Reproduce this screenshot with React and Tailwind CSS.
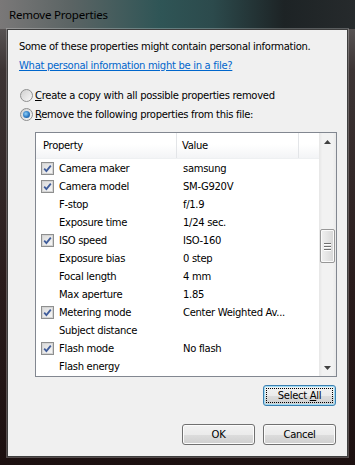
import React from "react";

const rows = [
  [true, "Camera maker", "samsung"],
  [true, "Camera model", "SM-G920V"],
  [false, "F-stop", "f/1.9"],
  [false, "Exposure time", "1/24 sec."],
  [true, "ISO speed", "ISO-160"],
  [false, "Exposure bias", "0 step"],
  [false, "Focal length", "4 mm"],
  [false, "Max aperture", "1.85"],
  [true, "Metering mode", "Center Weighted Av..."],
  [false, "Subject distance", ""],
  [true, "Flash mode", "No flash"],
  [false, "Flash energy", ""],
];

function Check() {
  return (
    <div className="w-[13px] h-[13px] border border-[#8e8f8f] bg-[#f4f4f4] flex items-center justify-center">
      <div className="w-[11px] h-[11px] border border-[#d4d4d4] bg-[linear-gradient(135deg,#dcdcdc_0%,#f6f6f6_100%)] flex items-center justify-center">
        <svg width="9" height="9" viewBox="0 0 9 9">
          <path d="M1.2 4.6 L3.4 7 L7.8 1.6" fill="none" stroke="#3f5c9a" strokeWidth="1.8" />
        </svg>
      </div>
    </div>
  );
}

function Radio({ checked }) {
  return (
    <div className="w-[13px] h-[13px] rounded-full border border-[#8e8f8f] bg-[linear-gradient(135deg,#d0d0d0_0%,#f8f8f8_100%)] flex items-center justify-center">
      {checked && (
        <div className="w-[7px] h-[7px] rounded-full bg-[radial-gradient(circle_at_40%_40%,#8ed0f8_0%,#2b78c2_55%,#1b4f8a_100%)]" />
      )}
    </div>
  );
}

function Button({ children, focused }) {
  return (
    <div
      className={
        "w-[73px] h-[21px] rounded-[3px] border flex items-center justify-center " +
        (focused
          ? "border-[#3c7fb1] shadow-[inset_0_0_0_1px_#9fdcf5] bg-[linear-gradient(180deg,#f2f2f2_0%,#ebebeb_50%,#dddddd_50%,#cfcfcf_100%)] p-[2px]"
          : "border-[#707070] shadow-[inset_0_0_0_1px_#fcfcfc] bg-[linear-gradient(180deg,#f2f2f2_0%,#ebebeb_50%,#dddddd_50%,#cfcfcf_100%)]")
      }
    >
      {focused ? (
        <div className="w-full h-full border border-dotted border-black flex items-center justify-center">
          {children}
        </div>
      ) : (
        children
      )}
    </div>
  );
}

export default function App() {
  const font = "font-['Tahoma','DejaVu_Sans',sans-serif]";
  return (
    <div className="w-[355px] h-[465px] overflow-hidden flex flex-col bg-[linear-gradient(180deg,#6a6868_0%,#3c3434_15%,#2a1c1c_60%,#1c1010_100%)]">
      <div className="h-[29px] shrink-0 flex items-center pl-[9px] bg-[linear-gradient(90deg,#7a7878_0%,#5b6464_20%,#2f5556_45%,#2c4a4c_60%,#1d2325_80%,#262a2c_100%)]">
        <span className="text-[11.5px] text-black font-['Noto_Sans','Open_Sans',sans-serif] leading-none tracking-[-0.2px]">
          Remove Properties
        </span>
      </div>
      <div className="flex px-[7px]">
        <div
          className={
            "w-[341px] h-[428px] border border-[#3e3e3e] shadow-[0_0_0_1px_rgba(255,255,255,0.25)] bg-[#f0f0f0] flex flex-col pt-[10px] pl-[11px] pr-[10px] text-[10px] tracking-[-0.3px] text-black " +
            font
          }
        >
          <div className="h-[14px] leading-[14px]">
            Some of these properties might contain personal information.
          </div>
          <div className="h-[14px] leading-[14px] mt-[5px] text-[#0066cc] underline">
            What personal information might be in a file?
          </div>
          <div className="flex items-center h-[16px] mt-[14px] pl-[1px] gap-[2px]">
            <Radio />
            <span>
              <u>C</u>reate a copy with all possible properties removed
            </span>
          </div>
          <div className="flex items-center h-[16px] mt-[3px] pl-[1px] gap-[2px]">
            <Radio checked />
            <span>
              <u>R</u>emove the following properties from this file:
            </span>
          </div>
          <div className="ml-[16px] mt-[10px] w-[302px] h-[245px] border border-[#828790] bg-white flex">
            <div className="flex-1 flex flex-col overflow-hidden">
              <div className="h-[26px] shrink-0 flex bg-[linear-gradient(180deg,#ffffff_0%,#ffffff_45%,#f3f4f6_100%)] border-b border-[#eef0f2]">
                <div className="w-[141px] flex items-center pl-[7px] pb-[1px] border-r border-[#e3e5e8]">
                  Property
                </div>
                <div className="w-[122px] flex items-center pl-[5px] pb-[1px] border-r border-[#e3e5e8]">
                  Value
                </div>
                <div className="flex-1" />
              </div>
              <div className="flex flex-col">
                {rows.map(([c, p, v]) => (
                  <div key={p} className="h-[18px] flex items-center">
                    <div className="w-[142px] flex items-center pl-[5px] gap-[5px]">
                      <div className="w-[13px] h-[13px]">{c && <Check />}</div>
                      <span className="whitespace-nowrap">{p}</span>
                    </div>
                    <div className="pl-[5px] whitespace-nowrap">{v}</div>
                  </div>
                ))}
              </div>
            </div>
            <div className="w-[17px] shrink-0 flex flex-col bg-[linear-gradient(90deg,#e6e6e6_0%,#f2f2f2_20%,#f2f2f2_80%,#e9e9e9_100%)]">
              <div className="h-[17px] flex items-center justify-center">
                <svg width="7" height="4" viewBox="0 0 7 4">
                  <path d="M0 4 L3.5 0 L7 4 Z" fill="#404040" />
                </svg>
              </div>
              <div className="flex-1 flex flex-col items-center">
                <div className="mt-[79px] w-[15px] h-[34px] rounded-[2px] border border-[#979797] bg-[linear-gradient(90deg,#f0f0f0_0%,#e4e4e4_50%,#d6d6d6_100%)] shadow-[inset_0_0_0_1px_#fafafa] flex flex-col items-center justify-center gap-[2px]">
                  <div className="w-[7px] h-[1px] bg-[#707070] shadow-[0_1px_0_#ffffff]" />
                  <div className="w-[7px] h-[1px] bg-[#707070] shadow-[0_1px_0_#ffffff]" />
                  <div className="w-[7px] h-[1px] bg-[#707070] shadow-[0_1px_0_#ffffff]" />
                </div>
              </div>
              <div className="h-[17px] flex items-center justify-center">
                <svg width="7" height="4" viewBox="0 0 7 4">
                  <path d="M0 0 L3.5 4 L7 0 Z" fill="#404040" />
                </svg>
              </div>
            </div>
          </div>
          <div className="flex justify-end mt-[8px] pr-[1px]">
            <Button focused>
              <span>
                Select <u>A</u>ll
              </span>
            </Button>
          </div>
          <div className="flex justify-end gap-[8px] mt-[18px] pr-[1px]">
            <Button>OK</Button>
            <Button>Cancel</Button>
          </div>
        </div>
      </div>
    </div>
  );
}
